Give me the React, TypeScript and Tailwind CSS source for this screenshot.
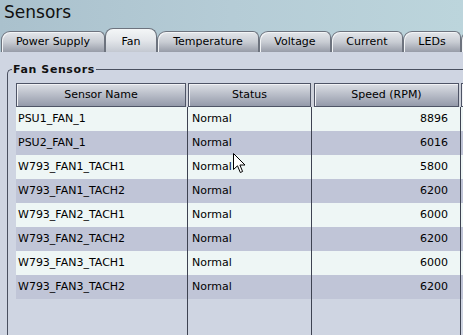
import React from "react";

const rows: [string, string, string][] = [
  ["PSU1_FAN_1", "Normal", "8896"],
  ["PSU2_FAN_1", "Normal", "6016"],
  ["W793_FAN1_TACH1", "Normal", "5800"],
  ["W793_FAN1_TACH2", "Normal", "6200"],
  ["W793_FAN2_TACH1", "Normal", "6000"],
  ["W793_FAN2_TACH2", "Normal", "6200"],
  ["W793_FAN3_TACH1", "Normal", "6000"],
  ["W793_FAN3_TACH2", "Normal", "6200"],
];

const tabs = [
  { label: "Power Supply", w: "w-[104px]", active: false },
  { label: "Fan", w: "w-[52px]", active: true },
  { label: "Temperature", w: "w-[102px]", active: false },
  { label: "Voltage", w: "w-[72px]", active: false },
  { label: "Current", w: "w-[72px]", active: false },
  { label: "LEDs", w: "w-[58px]", active: false },
  { label: "", w: "w-[30px]", active: false },
];

export default function App() {
  return (
    <div className="w-[463px] h-[335px] overflow-hidden relative bg-[#cfd5e2] flex flex-col font-['DejaVu_Sans',Verdana,sans-serif] text-black">
      <div className="h-[52px] shrink-0 bg-linear-to-r from-[#aac1cd] via-[#b5ccd6] to-[#bcd5dc] flex flex-col">
        <div className="pl-[4px] pt-[1px] text-[17px] leading-[22px] text-[#111]">Sensors</div>
        <div className="mt-auto flex items-end h-[24px] pl-[1px]">
          {tabs.map((t, i) =>
            t.active ? (
              <div
                key={i}
                className={`${t.w} shrink-0 h-[24px] border border-b-0 border-[#6d737e] rounded-t-[8px] bg-linear-to-b from-[#f4f6f7] via-[#e3e6ea] to-[#c3c8d1] text-[11px] flex items-start pt-[5px] justify-center`}
              >
                {t.label}
              </div>
            ) : (
              <div
                key={i}
                className={`${t.w} shrink-0 h-[21px] border border-b-0 border-[#6d737e] rounded-tl-[9px] rounded-tr-[6px] bg-linear-to-b from-[#e4e7eb] via-[#c8ccd3] to-[#979ca8] text-[11px] flex items-center justify-center shadow-[inset_1px_1px_0_#f2f4f6]`}
              >
                {t.label}
              </div>
            )
          )}
        </div>
      </div>
      <div className="flex-1 pt-[11px]">
        <fieldset className="ml-[7px] border-t border-l border-[#4a5060] rounded-tl-[5px] w-[520px] h-[280px] p-0 m-0">
          <legend className="ml-[4px] px-[1px] text-[11px] leading-[13px] font-bold tracking-[0.6px] text-[#111]">
            Fan Sensors
          </legend>
          <div className="pl-[8px] pt-[7px] flex flex-col h-full">
            <div className="h-[24px] flex bg-[#cdd1da] shrink-0">
              <div className="w-[170px] shrink-0 border border-[#4e5466] bg-linear-to-b from-[#dcdfe5] to-[#949aaa] shadow-[inset_1px_1px_0_#f1f2f5] text-[11px] flex items-center justify-center">
                Sensor Name
              </div>
              <div className="w-[2px] shrink-0" />
              <div className="w-[123px] shrink-0 border border-[#4e5466] bg-linear-to-b from-[#dcdfe5] to-[#949aaa] shadow-[inset_1px_1px_0_#f1f2f5] text-[11px] flex items-center justify-center">
                Status
              </div>
              <div className="w-[3px] shrink-0" />
              <div className="w-[145px] shrink-0 border border-[#4e5466] bg-linear-to-b from-[#dcdfe5] to-[#949aaa] shadow-[inset_1px_1px_0_#f1f2f5] text-[11px] flex items-center justify-center">
                Speed (RPM)
              </div>
              <div className="w-[2px] shrink-0" />
              <div className="w-[40px] shrink-0 border border-[#4e5466] bg-linear-to-b from-[#dcdfe5] to-[#949aaa] shadow-[inset_1px_1px_0_#f1f2f5]" />
            </div>
            {rows.map((r, i) => (
              <div
                key={i}
                className={`h-[24px] shrink-0 flex text-[11px] ${i % 2 === 0 ? "bg-[#eef6f5]" : "bg-[#c0c5d7]"}`}
              >
                <div className="w-[172px] shrink-0 border-r border-[#3e4352] pl-[2px] flex items-center">{r[0]}</div>
                <div className="w-[124px] shrink-0 border-r border-[#3e4352] pl-[4px] flex items-center">{r[1]}</div>
                <div className="w-[149px] shrink-0 border-r border-[#3e4352] pr-[12px] flex items-center justify-end">{r[2]}</div>
                <div className="flex-1" />
              </div>
            ))}
            <div className="flex-1 flex">
              <div className="w-[172px] shrink-0 border-r border-[#3e4352]" />
              <div className="w-[124px] shrink-0 border-r border-[#3e4352]" />
              <div className="w-[149px] shrink-0 border-r border-[#3e4352]" />
            </div>
          </div>
        </fieldset>
      </div>
      <svg
        className="absolute left-[233px] top-[153px]"
        width="14"
        height="22"
        viewBox="0 0 14 22"
      >
        <path
          d="M0.5 0.5 L0.5 16.5 L4.5 12.8 L7.3 19.5 L9.6 18.5 L6.9 12 L12 12 Z"
          fill="#fff"
          stroke="#000"
          strokeWidth="1"
          strokeLinejoin="miter"
        />
      </svg>
    </div>
  );
}
